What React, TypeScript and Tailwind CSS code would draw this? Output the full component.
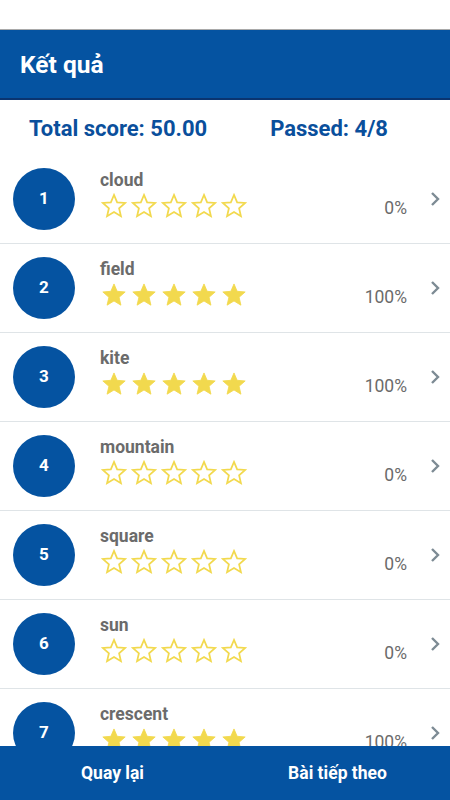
import React from "react";

const items = [
  { n: 1, w: "cloud", p: 0 },
  { n: 2, w: "field", p: 100 },
  { n: 3, w: "kite", p: 100 },
  { n: 4, w: "mountain", p: 0 },
  { n: 5, w: "square", p: 0 },
  { n: 6, w: "sun", p: 0 },
  { n: 7, w: "crescent", p: 100 },
  { n: 8, w: "moon", p: 0 },
];

function Star({ filled }: { filled: boolean }) {
  return (
    <svg width="26" height="26" viewBox="0 0 24 24" className="shrink-0">
      <polygon
        points="12,1.8 14.9,8.6 22.3,9.2 16.7,14.1 18.4,21.4 12,17.5 5.6,21.4 7.3,14.1 1.7,9.2 9.1,8.6"
        fill={filled ? "#f2d94e" : "none"}
        stroke="#f2d94e"
        strokeWidth={filled ? 0.8 : 1.6}
        strokeLinejoin="miter"
      />
    </svg>
  );
}

function Row({ n, w, p }: { n: number; w: string; p: number }) {
  return (
    <div className="flex h-[89px] shrink-0 items-center border-b border-[#dfe4e7]">
      <div className="ml-[13px] flex h-[62px] w-[62px] shrink-0 items-center justify-center rounded-full bg-[#0553a1] text-[17px] font-bold text-white">
        {n}
      </div>
      <div className="ml-[25px] flex flex-1 flex-col self-start pt-[15px]">
        <div className="text-[17.5px] font-bold leading-[20px] text-[#6b6b6b]">{w}</div>
        <div className="ml-[1px] mt-[3px] flex gap-[4px]">
          {[0, 1, 2, 3, 4].map((i) => (
            <Star key={i} filled={p === 100} />
          ))}
        </div>
      </div>
      <div className="self-start pt-[43px] text-[17.5px] leading-[20px] text-[#6b6b6b]">{p}%</div>
      <div className="ml-[22px] mr-[9px] flex h-[20px] w-[12px] items-center justify-center">
        <svg width="12" height="16" viewBox="0 0 12 16">
          <path d="M3 2 L9 8 L3 14" fill="none" stroke="#7d8b94" strokeWidth="2.4" />
        </svg>
      </div>
    </div>
  );
}

export default function App() {
  return (
    <div
      className="flex h-[800px] w-[450px] flex-col overflow-hidden bg-white"
      style={{ fontFamily: "Roboto, 'Noto Sans', sans-serif" }}
    >
      <div className="h-[30px] shrink-0 border-b border-[#a9a9a9] bg-white" />
      <div className="flex h-[70px] shrink-0 items-center border-b-[2px] border-[#0a3470] bg-[#0553a1] pl-[20px]">
        <span className="mt-[2px] text-[24.5px] font-bold text-white">Kết quả</span>
      </div>
      <div className="flex h-[55px] shrink-0 items-center pt-[2px] text-[22px] font-bold text-[#0a4f9c]">
        <span className="ml-[29px]">Total score: 50.00</span>
        <span className="ml-[63px]">Passed: 4/8</span>
      </div>
      <div className="flex flex-1 flex-col overflow-hidden">
        {items.map((it) => (
          <Row key={it.n} {...it} />
        ))}
      </div>
      <div className="flex h-[54px] shrink-0 items-center bg-[#0553a1] text-[17.5px] font-bold text-white">
        <div className="flex flex-1 justify-center">Quay lại</div>
        <div className="flex flex-1 justify-center">Bài tiếp theo</div>
      </div>
    </div>
  );
}
